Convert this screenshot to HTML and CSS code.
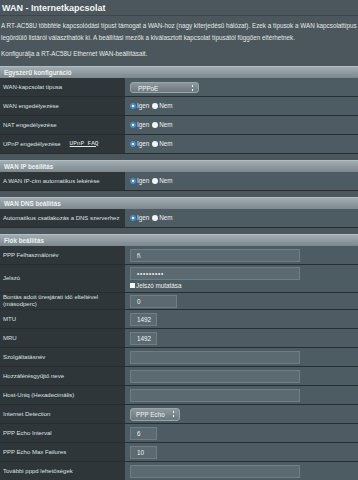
FILE: index.html
```html
<!DOCTYPE html>
<html lang="hu">
<head>
<title>WAN - Internetkapcsolat</title>
<meta charset="utf-8">
<meta name="viewport" content="width=device-width, initial-scale=1">
<link rel="stylesheet" href="styles.css">
</head>
<body>

<header>
  <h1>WAN - Internetkapcsolat</h1>
  <p class="desc">A RT-AC58U többféle kapcsolódási típust támogat a WAN-hoz (nagy kiterjedésű hálózat). Ezek a típusok a WAN kapcsolattípus legördülő listáról választhatók ki. A beállítási mezők a kiválasztott kapcsolat típusától függően eltérhetnek.</p>
  <p class="desc">Konfigurálja a RT-AC58U Ethernet WAN-beállításait.</p>
</header>

<section class="block">
  <div class="block_head">Egyszerű konfiguráció</div>
  <div class="row">
    <div class="label">WAN-kapcsolat típusa</div>
    <div class="value"><span class="select">PPPoE<i class="arrows"></i></span></div>
  </div>
  <div class="row">
    <div class="label">WAN engedélyezése</div>
    <div class="value"><span class="radio on"></span>Igen <span class="radio"></span>Nem</div>
  </div>
  <div class="row">
    <div class="label">NAT engedélyezése</div>
    <div class="value"><span class="radio on"></span>Igen <span class="radio"></span>Nem</div>
  </div>
  <div class="row">
    <div class="label">UPnP engedélyezése <a class="faq">UPnP&nbsp;FAQ</a></div>
    <div class="value"><span class="radio on"></span>Igen <span class="radio"></span>Nem</div>
  </div>
</section>

<section class="block">
  <div class="block_head">WAN IP beállítás</div>
  <div class="row">
    <div class="label">A WAN IP-cím automatikus lekérése</div>
    <div class="value"><span class="radio on"></span>Igen <span class="radio"></span>Nem</div>
  </div>
</section>

<section class="block">
  <div class="block_head">WAN DNS beállítás</div>
  <div class="row">
    <div class="label nowrap">Automatikus csatlakozás a DNS szerverhez</div>
    <div class="value"><span class="radio on"></span>Igen <span class="radio"></span>Nem</div>
  </div>
</section>

<section class="block">
  <div class="block_head">Fiók beállítás</div>
  <div class="row">
    <div class="label">PPP Felhasználónév</div>
    <div class="value"><span class="field long">f\</span></div>
  </div>
  <div class="row tall">
    <div class="label">Jelszó</div>
    <div class="value stack">
      <span class="field long dots">•••••••••</span>
      <span class="check"><span class="box"></span>Jelszó mutatása</span>
    </div>
  </div>
  <div class="row short">
    <div class="label">Bontás adott üresjárati idő elteltével (másodperc)</div>
    <div class="value"><span class="field mid">0</span></div>
  </div>
  <div class="row">
    <div class="label">MTU</div>
    <div class="value"><span class="field tiny">1492</span></div>
  </div>
  <div class="row">
    <div class="label">MRU</div>
    <div class="value"><span class="field tiny">1492</span></div>
  </div>
  <div class="row">
    <div class="label">Szolgáltatásnév</div>
    <div class="value"><span class="field long"></span></div>
  </div>
  <div class="row">
    <div class="label">Hozzáférésgyűjtő neve</div>
    <div class="value"><span class="field long"></span></div>
  </div>
  <div class="row">
    <div class="label">Host-Uniq (Hexadecimális)</div>
    <div class="value"><span class="field long"></span></div>
  </div>
  <div class="row">
    <div class="label">Internet Detection</div>
    <div class="value"><span class="select echo">PPP&nbsp;Echo<i class="arrows"></i></span></div>
  </div>
  <div class="row">
    <div class="label">PPP Echo Interval</div>
    <div class="value"><span class="field tiny">6</span></div>
  </div>
  <div class="row">
    <div class="label">PPP Echo Max Failures</div>
    <div class="value"><span class="field tiny">10</span></div>
  </div>
  <div class="row">
    <div class="label">További pppd lehetőségek</div>
    <div class="value"><span class="field long"></span></div>
  </div>
</section>

</body>
</html>
```

FILE: styles.css
```css
body {
  margin: 0;
  background: #4b575c;
  color: #e4e8e9;
  font-family: "Liberation Sans", Arial, sans-serif;
  font-size: 6.3px;
  line-height: 1.15;
}
header {
  padding-bottom: 6px;
}
h1 {
  margin: 0;
  padding: 3px 2px 2px;
  height: 10px;
  font-size: 9px;
  font-weight: bold;
  color: #f4f6f6;
  border-bottom: 1px solid #3c474b;
}
.desc {
  margin: 4px 0 0;
  padding: 0 1px;
  line-height: 12px;
}
.block {
  margin-bottom: 6px;
}
.block_head {
  height: 12px;
  line-height: 12px;
  padding-left: 4px;
  font-weight: bold;
  color: #eef1f2;
  background: linear-gradient(#a1adb2, #7c888d);
  border-top: 1px solid #b4bec2;
  box-sizing: border-box;
}
.row {
  display: grid;
  grid-template-columns: 125px 1fr;
  height: 19px;
  border-bottom: 1px solid #262e31;
  box-sizing: border-box;
}
.row.tall {
  height: 28px;
}
.row.short {
  height: 17px;
}
.label {
  display: flex;
  align-items: center;
  padding-left: 3px;
  padding-right: 2px;
  font-size: 6px;
  background: #2e363a;
  color: #dde1e3;
}
.label.nowrap {
  white-space: nowrap;
}
.value {
  display: flex;
  align-items: center;
  padding-left: 5px;
  background: #4d5c62;
  color: #eef1f2;
}
.value.stack {
  flex-direction: column;
  align-items: flex-start;
  justify-content: center;
  gap: 2px;
}
.faq {
  margin-left: 9px;
  font-family: "Liberation Mono", monospace;
  font-size: 6px;
  text-decoration: underline;
  color: #e4e8e9;
}
.radio {
  display: inline-block;
  width: 6px;
  height: 6px;
  border-radius: 50%;
  background: #f2f4f5;
  margin-right: 1px;
  box-sizing: border-box;
}
.radio.on {
  background: radial-gradient(circle, #ffffff 0 0.8px, #3f8fd8 1.3px);
}
.value .radio:not(:first-child) {
  margin-left: 3px;
}
.select {
  position: relative;
  display: inline-block;
  width: 69px;
  height: 11px;
  line-height: 11px;
  padding-left: 7px;
  box-sizing: border-box;
  border-radius: 3px;
  background: linear-gradient(#8c989d, #6b787d);
  border: 1px solid #9aa5aa;
  color: #f3f5f5;
}
.select.echo {
  width: 50px;
  height: 13px;
  line-height: 12px;
  padding-left: 5px;
}
.arrows {
  position: absolute;
  right: 5px;
  top: 2px;
  width: 1px;
  height: 6px;
  border-top: 2px solid #f3f5f5;
  border-bottom: 2px solid #f3f5f5;
  box-sizing: border-box;
}
.field {
  display: inline-block;
  height: 13px;
  line-height: 12px;
  padding-left: 6px;
  box-sizing: border-box;
  background: #5a6a70;
  border: 1px solid #6e7e84;
  color: #f2f4f5;
}
.field.dots {
  letter-spacing: 0.8px;
}
.field.long {
  width: 170px;
}
.field.mid {
  width: 47px;
}
.field.tiny {
  width: 27px;
}
.check {
  display: flex;
  align-items: center;
}
.box {
  display: inline-block;
  width: 5px;
  height: 5px;
  margin-right: 1px;
  background: #f4f6f6;
}
```
